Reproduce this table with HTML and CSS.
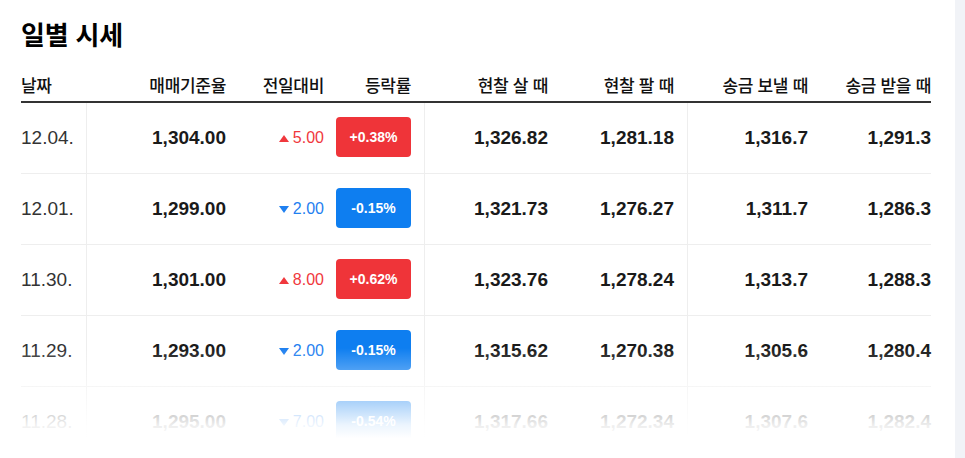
FILE: index.html
```html
<!DOCTYPE html>
<html lang="ko">
<head>
<meta charset="utf-8">
<title>일별 시세</title>
<link rel="stylesheet" href="styles.css">
</head>
<body>
<div class="page">
  <main class="content">
    <h2 class="title">일별 시세</h2>
    <div class="table">
      <div class="row head">
        <div class="cell c1">날짜</div>
        <div class="cell c2">매매기준율</div>
        <div class="cell c3">전일대비</div>
        <div class="cell c4">등락률</div>
        <div class="cell c5">현찰 살 때</div>
        <div class="cell c6">현찰 팔 때</div>
        <div class="cell c7">송금 보낼 때</div>
        <div class="cell c8">송금 받을 때</div>
      </div>

      <div class="row">
        <div class="cell c1 date">12.04.</div>
        <div class="cell c2 num line">1,304.00</div>
        <div class="cell c3 chg up"><span class="tri"></span>5.00</div>
        <div class="cell c4"><span class="badge up">+0.38%</span></div>
        <div class="cell c5 num line">1,326.82</div>
        <div class="cell c6 num">1,281.18</div>
        <div class="cell c7 num line">1,316.7</div>
        <div class="cell c8 num">1,291.3</div>
      </div>

      <div class="row">
        <div class="cell c1 date">12.01.</div>
        <div class="cell c2 num line">1,299.00</div>
        <div class="cell c3 chg down"><span class="tri"></span>2.00</div>
        <div class="cell c4"><span class="badge down">-0.15%</span></div>
        <div class="cell c5 num line">1,321.73</div>
        <div class="cell c6 num">1,276.27</div>
        <div class="cell c7 num line">1,311.7</div>
        <div class="cell c8 num">1,286.3</div>
      </div>

      <div class="row">
        <div class="cell c1 date">11.30.</div>
        <div class="cell c2 num line">1,301.00</div>
        <div class="cell c3 chg up"><span class="tri"></span>8.00</div>
        <div class="cell c4"><span class="badge up">+0.62%</span></div>
        <div class="cell c5 num line">1,323.76</div>
        <div class="cell c6 num">1,278.24</div>
        <div class="cell c7 num line">1,313.7</div>
        <div class="cell c8 num">1,288.3</div>
      </div>

      <div class="row">
        <div class="cell c1 date">11.29.</div>
        <div class="cell c2 num line">1,293.00</div>
        <div class="cell c3 chg down"><span class="tri"></span>2.00</div>
        <div class="cell c4"><span class="badge down">-0.15%</span></div>
        <div class="cell c5 num line">1,315.62</div>
        <div class="cell c6 num">1,270.38</div>
        <div class="cell c7 num line">1,305.6</div>
        <div class="cell c8 num">1,280.4</div>
      </div>

      <div class="row">
        <div class="cell c1 date">11.28.</div>
        <div class="cell c2 num line">1,295.00</div>
        <div class="cell c3 chg down"><span class="tri"></span>7.00</div>
        <div class="cell c4"><span class="badge down">-0.54%</span></div>
        <div class="cell c5 num line">1,317.66</div>
        <div class="cell c6 num">1,272.34</div>
        <div class="cell c7 num line">1,307.6</div>
        <div class="cell c8 num">1,282.4</div>
      </div>
    </div>
    <div class="fade"></div>
  </main>
  <div class="side"></div>
</div>
</body>
</html>
```

FILE: styles.css
```css
* { box-sizing: border-box; }

html, body {
  margin: 0;
  padding: 0;
  height: 458px;
  overflow: hidden;
  background: #ffffff;
}

body {
  font-family: "Liberation Sans", "Noto Sans CJK KR", Arial, sans-serif;
  color: #222;
}

.page {
  display: flex;
  height: 458px;
}

.content {
  position: relative;
  width: 955px;
  height: 458px;
  padding: 16px 24px 0 21px;
  background: #fff;
  overflow: hidden;
}

.side {
  width: 10px;
  flex: none;
  background: #f1f3f7;
}

.title {
  margin: 0;
  font-family: "Noto Sans CJK KR", sans-serif;
  font-size: 26px;
  font-weight: 700;
  line-height: 35px;
  color: #000;
  letter-spacing: -0.2px;
}

.table {
  margin-top: 18px;
  width: 910px;
}

.row {
  display: grid;
  grid-template-columns: 65px 153px 97px 88px 137px 126px 134px 110px;
  height: 71px;
  border-bottom: 1px solid #eeeeee;
}

.row.head {
  height: 34px;
  border-bottom: 2px solid #333;
}

.cell {
  display: flex;
  align-items: center;
  justify-content: flex-end;
  padding-right: 13px;
  white-space: nowrap;
}

.c1 { justify-content: flex-start; padding-right: 0; }
.c3 { padding-right: 12px; }
.c4 { justify-content: flex-start; padding-right: 0; }
.c8 { padding-right: 0; }

.head .cell {
  font-family: "Noto Sans CJK KR", sans-serif;
  font-size: 17px;
  font-weight: 500;
  letter-spacing: -0.3px;
  color: #111;
  padding-bottom: 1px;
}
.head .c4 { justify-content: flex-end; padding-right: 13px; }

.line { border-left: 1px solid #eeeeee; }

.date {
  font-size: 19px;
  color: #333;
}

.num {
  font-size: 19px;
  font-weight: 700;
  color: #1a1a1a;
}

.chg {
  font-size: 16px;
}
.chg.up { color: #f0383d; }
.chg.down { color: #1f80f0; }

.tri {
  width: 0;
  height: 0;
  margin-right: 4px;
  border-left: 5px solid transparent;
  border-right: 5px solid transparent;
}
.up .tri { border-bottom: 7px solid #f0383d; }
.down .tri { border-top: 7px solid #1f80f0; }

.badge {
  display: flex;
  align-items: center;
  justify-content: center;
  width: 75px;
  height: 40px;
  margin-top: -2px;
  border-radius: 4px;
  color: #fff;
  font-size: 14px;
  font-weight: 700;
}
.badge.up { background: #ef3439; }
.badge.down { background: #0e7ef0; }

.fade {
  position: absolute;
  left: 0;
  right: 0;
  bottom: 0;
  height: 110px;
  background: linear-gradient(to bottom, rgba(255,255,255,0) 0%, rgba(255,255,255,0.6) 45%, rgba(255,255,255,0.92) 70%, #fff 82%);
  pointer-events: none;
}
```
